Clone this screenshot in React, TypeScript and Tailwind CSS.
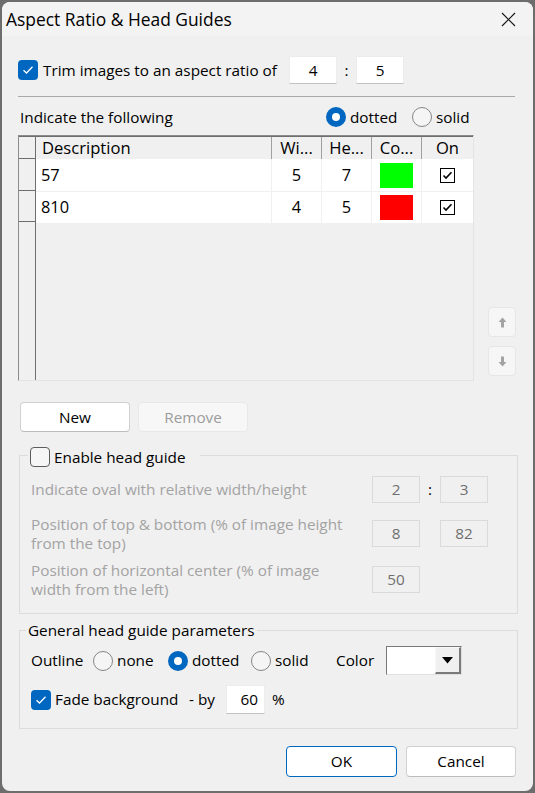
import React from "react";

const font = "font-['Open_Sans','Noto_Sans',sans-serif]";

const Tick = () => (
  <svg width="12" height="10" viewBox="0 0 12 10">
    <path d="M1.5 5.2 L4.5 8 L10.5 1.8" fill="none" stroke="white" strokeWidth="1.3" />
  </svg>
);

function CheckBox({ checked }: { checked?: boolean }) {
  if (checked)
    return (
      <span className="w-[20px] h-[20px] rounded-[4px] bg-[#0067c0] flex items-center justify-center shrink-0">
        <Tick />
      </span>
    );
  return <span className="w-[20px] h-[20px] rounded-[4px] border border-[#5c5c5c] bg-[#f6f6f6] shrink-0" />;
}

function Radio({ on }: { on?: boolean }) {
  if (on)
    return (
      <span className="w-[20px] h-[20px] rounded-full bg-[#0067c0] flex items-center justify-center shrink-0">
        <span className="w-[8px] h-[8px] rounded-full bg-white" />
      </span>
    );
  return <span className="w-[20px] h-[20px] rounded-full border border-[#868686] bg-[#f5f5f5] shrink-0" />;
}

// classic little checkbox used in the grid
const GridCheck = () => (
  <span className="w-[15px] h-[15px] border border-black bg-white flex items-center justify-center">
    <svg width="11" height="9" viewBox="0 0 11 9">
      <path d="M1.5 4.5 L4 7 L9.5 1.2" fill="none" stroke="black" strokeWidth="1.6" />
    </svg>
  </span>
);

function Field({ value, className }: { value: string; className: string }) {
  return (
    <div
      className={`bg-white border border-[#ececec] border-b-[#c2c2c2] flex items-center justify-center text-black ${className}`}
    >
      {value}
    </div>
  );
}

function DisabledField({ value }: { value: string }) {
  return (
    <div className="w-[48px] h-[27px] border border-[#dadada] flex items-center justify-center text-[#6f6f6f]">
      {value}
    </div>
  );
}

const ArrowUp = () => (
  <svg width="9" height="11" viewBox="0 0 9 11">
    <path d="M4.5 0.5 L8.5 5 L6 5 L6 10.5 L3 10.5 L3 5 L0.5 5 Z" fill="#a3a3a3" />
  </svg>
);

const ArrowDown = () => (
  <svg width="9" height="11" viewBox="0 0 9 11">
    <path d="M4.5 10.5 L8.5 6 L6 6 L6 0.5 L3 0.5 L3 6 L0.5 6 Z" fill="#a3a3a3" />
  </svg>
);

const rows = [
  { name: "57", w: "5", h: "7", color: "bg-[#00ff00]" },
  { name: "810", w: "4", h: "5", color: "bg-[#ff0000]" },
];

function Grid() {
  return (
    <div className="w-[456px] h-[246px] border border-[#8c8c8c] border-r-[#e4e4e4] border-b-[#e4e4e4] bg-[#f0f0f0] flex">
      {/* row header column */}
      <div className="w-[17px] border-r border-[#6e6e6e] flex flex-col">
        <div className="h-[23px] border-b border-[#6e6e6e] border-t border-t-[#6e6e6e]" />
        <div className="h-[32px] border-b border-[#6e6e6e]" />
        <div className="h-[31px] border-b border-[#6e6e6e]" />
      </div>
      <div className="flex-1 flex flex-col">
        <div className="h-[23px] flex border-t border-[#6e6e6e] text-[16.6px] text-black leading-none">
          <div className="w-[236px] border-r border-[#a0a0a0] pl-[6px] flex items-center">Description</div>
          <div className="w-[50px] border-r border-[#a0a0a0] flex items-center justify-center">Wi...</div>
          <div className="w-[50px] border-r border-[#a0a0a0] flex items-center justify-center">He...</div>
          <div className="w-[50px] border-r border-[#a0a0a0] flex items-center justify-center">Co...</div>
          <div className="flex-1 flex items-center justify-center">On</div>
        </div>
        {rows.map((r, i) => (
          <div
            key={r.name}
            className={`flex bg-white border-b border-[#f0f0f0] text-[16.4px] text-black ${i === 0 ? "h-[33px]" : "h-[32px]"}`}
          >
            <div className="w-[236px] border-r border-[#f0f0f0] pl-[5px] flex items-center">{r.name}</div>
            <div className="w-[50px] border-r border-[#f0f0f0] flex items-center justify-center">{r.w}</div>
            <div className="w-[50px] border-r border-[#f0f0f0] flex items-center justify-center">{r.h}</div>
            <div className="w-[50px] border-r border-[#f0f0f0] flex items-center justify-center">
              <span className={`w-[33px] h-[25px] ${r.color}`} />
            </div>
            <div className="flex-1 flex items-center justify-center">
              <GridCheck />
            </div>
          </div>
        ))}
      </div>
    </div>
  );
}

export default function App() {
  return (
    <div className={`w-[535px] h-[793px] bg-[#6d6d6d] pt-[2px] pl-[2px] ${font}`}>
      <div className="w-[531px] h-[789px] rounded-[8px] bg-[#f0f0f0] overflow-hidden flex flex-col">
        {/* title bar */}
        <div className="h-[34px] bg-[#f3f3f3] flex items-center justify-between pl-[4px] pr-[17px]">
          <span className="text-[17.4px] text-black">Aspect Ratio &amp; Head Guides</span>
          <svg width="15" height="15" viewBox="0 0 15 15">
            <path d="M1 1 L14 14 M14 1 L1 14" stroke="#1a1a1a" strokeWidth="1.2" />
          </svg>
        </div>

        <div className="flex flex-col pl-[16px] text-[15.3px] text-black">
          {/* trim row */}
          <div className="mt-[20px] h-[28px] flex items-center">
            <CheckBox checked />
            <span className="w-[251px] pl-[5px]">Trim images to an aspect ratio of</span>
            <Field value="4" className="w-[48px] h-[28px]" />
            <span className="w-[19px] text-center">:</span>
            <Field value="5" className="w-[48px] h-[28px]" />
          </div>

          <div className="mt-[12px] w-[497px] h-px bg-[#a9a9a9]" />

          {/* indicate row */}
          <div className="mt-[10px] h-[20px] flex items-center pl-[2px]">
            <span className="w-[306px]">Indicate the following</span>
            <Radio on />
            <span className="ml-[4px] w-[62px]">dotted</span>
            <Radio />
            <span className="ml-[4px]">solid</span>
          </div>

          {/* grid + move buttons */}
          <div className="mt-[8px] flex">
            <Grid />
            <div className="ml-[14px] pt-[172px] flex flex-col gap-[9px]">
              <div className="w-[28px] h-[30px] rounded-[4px] bg-[#f6f6f6] border border-[#e6e6e6] flex items-center justify-center">
                <ArrowUp />
              </div>
              <div className="w-[28px] h-[30px] rounded-[4px] bg-[#f6f6f6] border border-[#e6e6e6] flex items-center justify-center">
                <ArrowDown />
              </div>
            </div>
          </div>

          {/* new / remove */}
          <div className="mt-[21px] ml-[2px] flex gap-[8px]">
            <div className="w-[110px] h-[30px] rounded-[4px] bg-white border border-[#d0d0d0] border-b-[#bcbcbc] flex items-center justify-center">
              New
            </div>
            <div className="w-[110px] h-[30px] rounded-[4px] bg-[#f7f7f7] border border-[#e8e8e8] text-[#9c9c9c] flex items-center justify-center">
              Remove
            </div>
          </div>

          {/* head guide group */}
          <div className="relative mt-[23px] ml-[1px] w-[499px] h-[159px] border border-[#dcdcdc]">
            <div className="absolute left-[8px] top-[-9px] pl-[2px] pr-[15px] bg-[#f0f0f0] flex items-center h-[20px]">
              <CheckBox />
              <span className="ml-[4px]">Enable head guide</span>
            </div>
            <div className="pl-[11px] text-[#a3a3a3] leading-[19px]">
              <div className="mt-[20px] h-[27px] flex items-center">
                <span className="w-[341px]">Indicate oval with relative width/height</span>
                <DisabledField value="2" />
                <span className="w-[20px] text-center text-black">:</span>
                <DisabledField value="3" />
              </div>
              <div className="mt-[17px] h-[27px] flex items-center">
                <span className="w-[341px]">
                  Position of top &amp; bottom (% of image height
                  <br />
                  from the top)
                </span>
                <DisabledField value="8" />
                <span className="w-[20px]" />
                <DisabledField value="82" />
              </div>
              <div className="mt-[19px] h-[27px] flex items-center">
                <span className="w-[341px]">
                  Position of horizontal center (% of image
                  <br />
                  width from the left)
                </span>
                <DisabledField value="50" />
              </div>
            </div>
          </div>

          {/* general parameters group */}
          <div className="relative mt-[16px] ml-[1px] w-[499px] h-[99px] border border-[#dcdcdc]">
            <div className="absolute left-[6px] top-[-11px] px-[2px] bg-[#f0f0f0] h-[20px] flex items-center">
              General head guide parameters
            </div>
            <div className="pl-[11px]">
              <div className="mt-[15px] h-[29px] flex items-center">
                <span className="w-[62px]">Outline</span>
                <Radio />
                <span className="ml-[4px] w-[51px]">none</span>
                <Radio on />
                <span className="ml-[4px] w-[59px]">dotted</span>
                <Radio />
                <span className="ml-[4px] w-[61px]">solid</span>
                <span className="w-[50px]">Color</span>
                <div className="w-[76px] h-[29px] border border-[#7a7a7a] border-r-[#e0e0e0] border-b-[#e0e0e0] bg-white flex">
                  <div className="flex-1" />
                  <div className="w-[26px] bg-[#f0f0f0] border-l border-t border-[#f8f8f8] border-r-2 border-b-2 border-r-[#7a7a7a] border-b-[#7a7a7a] flex items-center justify-center">
                    <svg width="11" height="7" viewBox="0 0 11 7">
                      <path d="M0 0 L11 0 L5.5 6.5 Z" fill="black" />
                    </svg>
                  </div>
                </div>
              </div>
              <div className="mt-[10px] h-[29px] flex items-center">
                <CheckBox checked />
                <span className="ml-[4px] w-[134px]">Fade background</span>
                <span className="w-[37px]">- by</span>
                <div className="w-[39px] h-[29px] bg-white border border-[#ececec] border-b-[#c2c2c2] flex items-center justify-end pr-[6px]">
                  60
                </div>
                <span className="ml-[7px]">%</span>
              </div>
            </div>
          </div>

          {/* ok / cancel */}
          <div className="mt-[17px] w-[498px] flex justify-end gap-[9px]">
            <div className="w-[111px] h-[31px] rounded-[4px] bg-white border border-[#0067c0] flex items-center justify-center">
              OK
            </div>
            <div className="w-[110px] h-[31px] rounded-[4px] bg-white border border-[#d0d0d0] border-b-[#bcbcbc] flex items-center justify-center">
              Cancel
            </div>
          </div>
        </div>
      </div>
    </div>
  );
}
